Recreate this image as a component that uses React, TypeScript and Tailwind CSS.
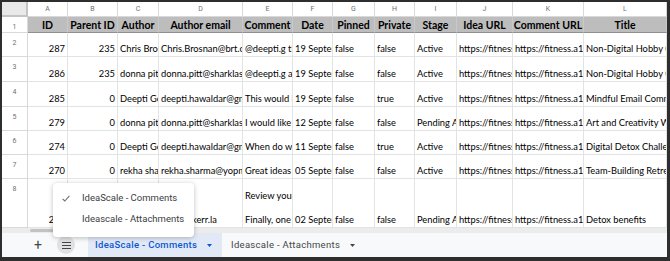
import React from 'react';
import clsx from 'clsx';

// Google Sheets export: IdeaScale comments with the sheet list menu open
const letters = ['A', 'B', 'C', 'D', 'E', 'F', 'G', 'H', 'I', 'J', 'K', 'L'];
const headers = ['ID', 'Parent ID', 'Author', 'Author email', 'Comment', 'Date', 'Pinned', 'Private', 'Stage', 'Idea URL', 'Comment URL', 'Title'];

// cell text is cut at the column edge, as the sheet shows it
const rows: string[][] = [
  ['287', '235', 'Chris Brosn', 'Chris.Brosnan@brt.co', '@deepti.g  th', '19 Septem', 'false', 'false', 'Active', 'https://fitness', 'https://fitness.a1', 'Non-Digital Hobby C'],
  ['286', '235', 'donna pitt', 'donna.pitt@sharklase', '@deepti.g  ag', '19 Septem', 'false', 'false', 'Active', 'https://fitness', 'https://fitness.a1', 'Non-Digital Hobby C'],
  ['285', '0', 'Deepti Gow', 'deepti.hawaldar@gma', 'This would be', '19 Septem', 'false', 'true', 'Active', 'https://fitness', 'https://fitness.a1', 'Mindful Email Comm'],
  ['279', '0', 'donna pitt', 'donna.pitt@sharklase', 'I would like to', '12 Septem', 'false', 'false', 'Pending Ap', 'https://fitness', 'https://fitness.a1', 'Art and Creativity W'],
  ['274', '0', 'Deepti Gow', 'deepti.hawaldar@gma', 'When do we s', '11 Septem', 'false', 'true', 'Active', 'https://fitness', 'https://fitness.a1', 'Digital Detox Challe'],
  ['270', '0', 'rekha shar', 'rekha.sharma@yopma', 'Great ideas', '05 Septem', 'false', 'false', 'Active', 'https://fitness', 'https://fitness.a1', 'Team-Building Retre'],
];

const cellBase = 'flex items-end overflow-hidden whitespace-nowrap border-r border-b border-[#e2e3e3] px-[2px] pb-[1px] text-[9.3px] leading-[12px] text-black';

function Cell({ value, right }: { value: React.ReactNode; right?: boolean }) {
  return <div className={clsx(cellBase, right && 'justify-end')}>{value}</div>;
}

function RowLabel({ n }: { n: number }) {
  return (
    <div className="flex justify-center overflow-hidden border-r border-b border-[#d9d9d9] bg-white pt-[6px] font-['Roboto',sans-serif] text-[7px] leading-[9px] text-[#6f6f6f]">
      {n}
    </div>
  );
}

export default function App() {
  return (
    <div className="relative flex h-[261px] w-[670px] flex-col overflow-hidden border-t-2 border-r-[3px] border-b-4 border-l-2 border-[#2e2e2e] bg-white font-['Lato',sans-serif]">
      <div className="grid flex-1 grid-cols-[26px_40px_50px_41px_84px_50px_40px_42px_40px_42px_56px_71px_1fr] grid-rows-[15px_16px_24px_25px_25px_24px_24px_24px_1fr]">
        {/* column letters */}
        <div className="border-r-2 border-b-2 border-[#c4c4c4] bg-[#e9e9e9]" />
        {letters.map((l) => (
          <div
            key={l}
            className="flex items-center justify-center border-r border-b border-[#d9d9d9] bg-white font-['Roboto',sans-serif] text-[7px] text-[#6f6f6f]"
          >
            {l}
          </div>
        ))}

        {/* header row */}
        <RowLabel n={1} />
        {headers.map((h) => (
          <div
            key={h}
            className="flex items-center justify-center overflow-hidden whitespace-nowrap border-r border-b border-r-[#c9c9c9] border-b-[#8f8f8f] bg-[#bdbdbd] pt-[2px] text-[10.5px] font-bold text-black"
          >
            {h}
          </div>
        ))}

        {rows.map((r, i) => (
          <React.Fragment key={r[0]}>
            <RowLabel n={i + 2} />
            {r.map((v, j) => (
              <Cell key={j} value={v} right={j < 2} />
            ))}
          </React.Fragment>
        ))}

        {/* row 8, partly under the menu */}
        <RowLabel n={8} />
        <Cell value="263" right />
        <Cell value="0" right />
        <Cell value="Sam Kerr" />
        <Cell value="sam.k@kerr.la" />
        <div className={cellBase}>
          <div className="flex flex-col">
            <span>Review your i</span>
            <span>&nbsp;</span>
            <span>Finally, one c</span>
          </div>
        </div>
        <Cell value="02 Septem" />
        <Cell value="false" />
        <Cell value="false" />
        <Cell value="Pending Ap" />
        <Cell value="https://fitness" />
        <Cell value="https://fitness.a1" />
        <Cell value="Detox benefits" />
      </div>

      {/* horizontal scrollbar */}
      <div className="h-[5px] bg-[#ececec]">
        <div className="ml-[28px] mt-[1px] h-[3px] w-[24px] rounded-full bg-[#c2c2c2]" />
      </div>

      {/* sheet tabs */}
      <div className="flex h-[24px] items-center bg-[#f8f9fa] font-['Roboto',sans-serif]">
        <div className="ml-[28px] flex w-[16px] justify-center text-[14px] leading-none text-[#444746]">+</div>
        <div className="ml-[11px] flex h-[18px] w-[18px] items-center justify-center rounded-full bg-[#dfe1e3]">
          <svg width="9" height="7" viewBox="0 0 9 7">
            <path d="M0 0.5H9M0 3.5H9M0 6.5H9" stroke="#444746" strokeWidth="1" />
          </svg>
        </div>
        <div className="ml-[13px] flex h-full w-[134px] items-center bg-[#e1e9f7] pl-[7px] text-[9.5px] font-medium tracking-[0.3px] text-[#0b57d0]">
          IdeaScale - Comments
          <svg className="ml-[10px]" width="5" height="3" viewBox="0 0 5 3">
            <path d="M0 0H5L2.5 3Z" fill="#0b57d0" />
          </svg>
        </div>
        <div className="flex h-full items-center pl-[9px] text-[9.5px] tracking-[0.3px] text-[#444746]">
          Ideascale - Attachments
          <svg className="ml-[10px]" width="5" height="3" viewBox="0 0 5 3">
            <path d="M0 0H5L2.5 3Z" fill="#444746" />
          </svg>
        </div>
      </div>

      {/* sheet list menu */}
      <div className="absolute top-[181px] left-[51px] flex h-[54px] w-[141px] flex-col rounded-[4px] bg-white pt-[5px] font-['Roboto',sans-serif] text-[9.5px] text-[#3c4043] shadow-[0_1px_5px_rgba(0,0,0,0.25)]">
        <div className="flex h-[21px] items-center">
          <svg className="ml-[9px]" width="8" height="7" viewBox="0 0 8 7">
            <path d="M0.6 3.8L2.8 6L7.4 0.8" fill="none" stroke="#6b6e72" strokeWidth="1.1" />
          </svg>
          <span className="ml-[12px]">IdeaScale - Comments</span>
        </div>
        <div className="flex h-[21px] items-center">
          <span className="ml-[29px]">Ideascale - Attachments</span>
        </div>
      </div>
    </div>
  );
}
